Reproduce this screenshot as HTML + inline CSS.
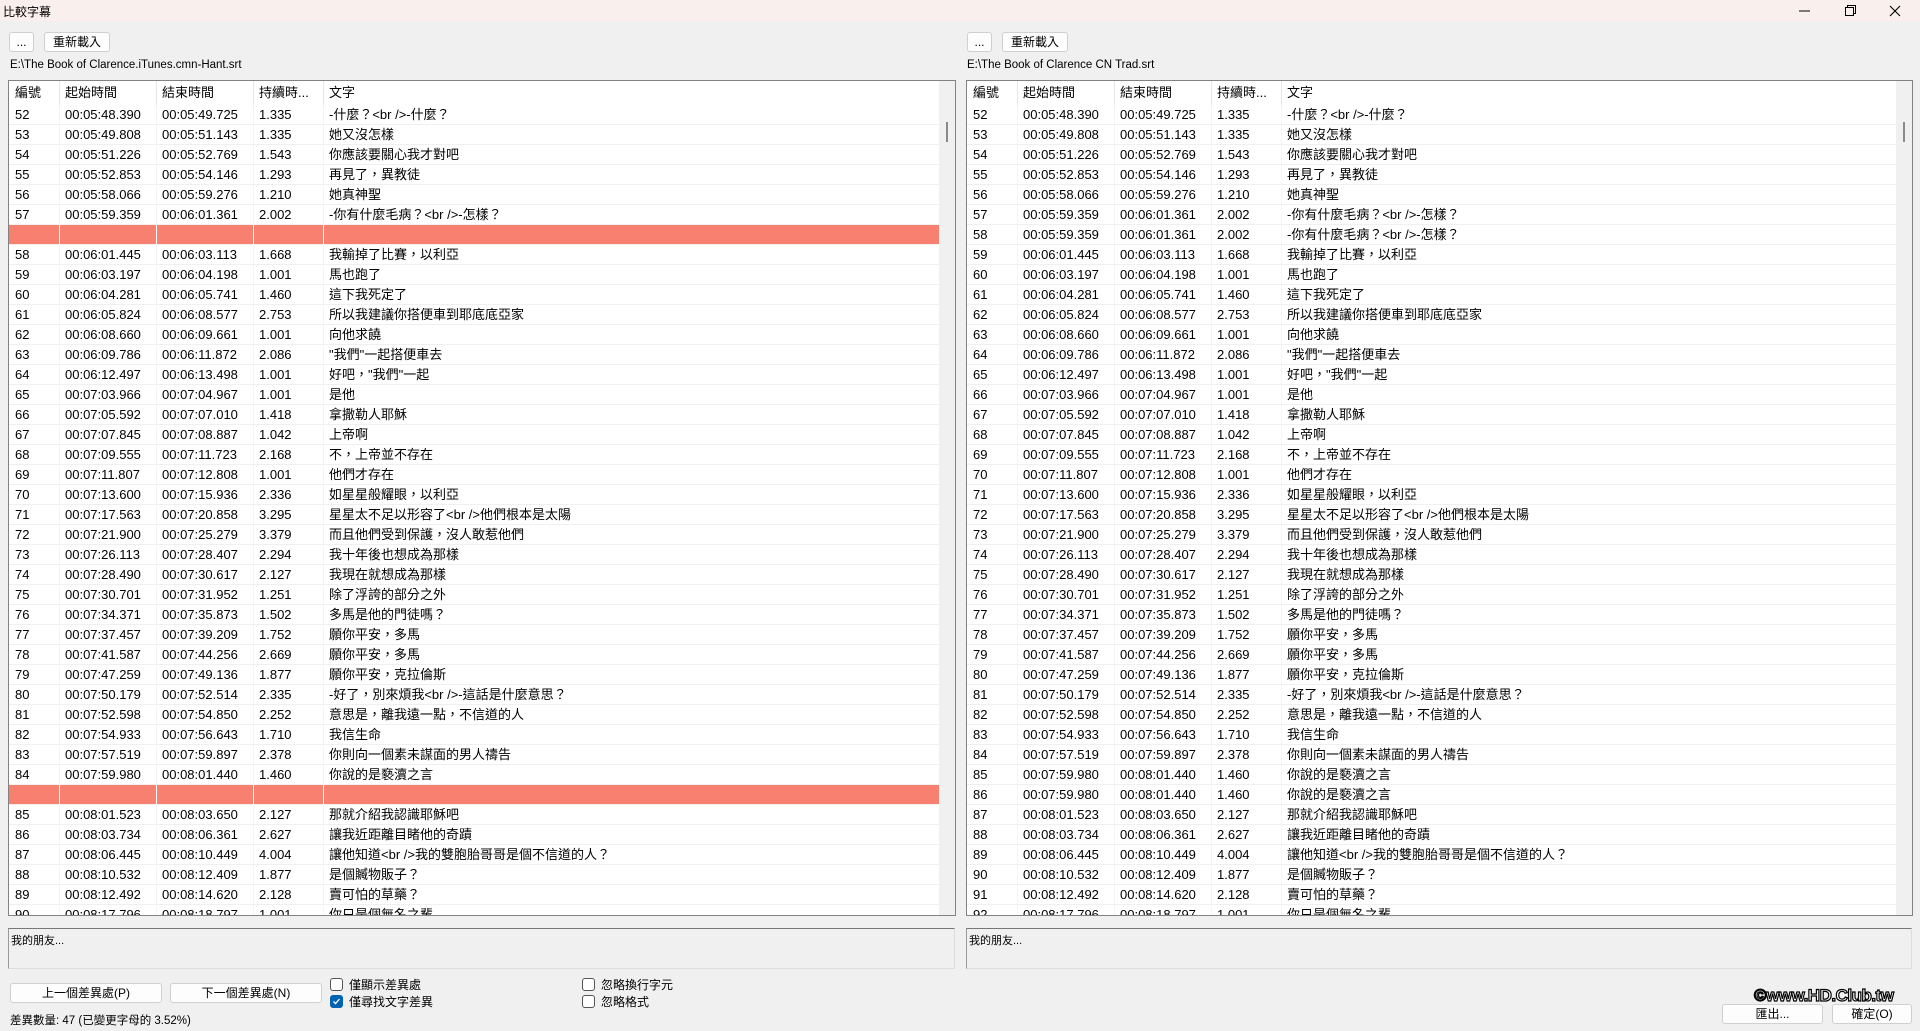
<!DOCTYPE html>
<html><head><meta charset="utf-8">
<style>
*{box-sizing:border-box;margin:0;padding:0}
body{width:1920px;height:1031px;background:#f0f0f0;font-family:"Liberation Sans","Noto Sans CJK TC",sans-serif;font-size:13px;color:#000;position:relative;overflow:hidden}
.title{position:absolute;left:0;top:0;width:1920px;height:21px;background:#f9f0ee}
.title span{position:absolute;left:3px;top:3px;font-size:12px}
.btn{position:absolute;background:#fdfdfd;border:1px solid #d0d0d0;border-radius:3px;font-size:12px;text-align:center;line-height:18px}
.path{position:absolute;font-size:11.5px;top:59px}
.tbl{position:absolute;top:80px;height:836px;background:#fff;border:1px solid #828282;overflow:hidden}
.hd,.r{position:absolute;left:0;height:20px;white-space:nowrap;width:930px}
.hd{top:0;height:24px;line-height:24px}
.r{line-height:20px;border-bottom:1px solid #f0f0f0}
.hd span,.r span{display:inline-block;padding-left:5px;overflow:hidden;vertical-align:top}
.hd span{border-right:1px solid #e5e5e5;height:24px}
.r span{border-right:1px solid #f4f4f4;height:20px}
.c1{width:51px;padding-left:6px!important}.c2{width:97px}.c3{width:97px}.c4{width:70px}.c5{width:615px}
.pk{background:#f88070}
.pk span{border-right:1px solid #fff}
.r span.c5,.hd span.c5{border-right:none}
.sb{position:absolute;top:0;right:0;width:16px;height:834px;background:#f0f0f0}
.sb i{position:absolute;left:7px;top:41px;width:2px;height:20px;background:#8a8a8a}
.memo{position:absolute;top:928px;height:41px;border-top:1px solid #777;border-left:1px solid #999;border-right:1px solid #ddd;border-bottom:1px solid #ddd;font-size:11px;padding:3px 2px}
.cb{position:absolute;width:13px;height:13px;border:1px solid #555;border-radius:3px;background:#fff}
.cb.on{background:#0063b1;border-color:#0063b1}
.lb{position:absolute;font-size:12px}
.wm{position:absolute;left:1754px;top:986px;font-size:17px;font-weight:bold;color:#fff;-webkit-text-stroke:1.2px #000;letter-spacing:-0.5px}
</style></head><body>
<div class="title"><span>比較字幕</span>
<svg style="position:absolute;left:1797px;top:4px" width="120" height="14"><line x1="2" y1="7" x2="13" y2="7" stroke="#000" stroke-width="1"/><rect x="48.5" y="3.5" width="8" height="8" fill="none" stroke="#000"/><path d="M50.5 3.5V1.5H58.5V9.5H56.5" fill="none" stroke="#000"/><path d="M93 2L103 12M103 2L93 12" stroke="#000" stroke-width="1.1"/></svg>
</div>

<div class="btn" style="left:9px;top:32px;width:25px;height:20px">...</div>
<div class="btn" style="left:44px;top:32px;width:66px;height:20px">重新載入</div>
<div class="path" style="left:10px">E:\The Book of Clarence.iTunes.cmn-Hant.srt</div>
<div class="btn" style="left:967px;top:32px;width:25px;height:20px">...</div>
<div class="btn" style="left:1002px;top:32px;width:66px;height:20px">重新載入</div>
<div class="path" style="left:967px">E:\The Book of Clarence CN Trad.srt</div>

<div class="tbl" style="left:8px;width:948px">
<div class="hd"><span class="c1">編號</span><span class="c2">起始時間</span><span class="c3">結束時間</span><span class="c4">持續時...</span><span class="c5">文字</span></div>
<div class="r" style="top:24px"><span class="c1">52</span><span class="c2">00:05:48.390</span><span class="c3">00:05:49.725</span><span class="c4">1.335</span><span class="c5">-什麼？&lt;br /&gt;-什麼？</span></div>
<div class="r" style="top:44px"><span class="c1">53</span><span class="c2">00:05:49.808</span><span class="c3">00:05:51.143</span><span class="c4">1.335</span><span class="c5">她又沒怎樣</span></div>
<div class="r" style="top:64px"><span class="c1">54</span><span class="c2">00:05:51.226</span><span class="c3">00:05:52.769</span><span class="c4">1.543</span><span class="c5">你應該要關心我才對吧</span></div>
<div class="r" style="top:84px"><span class="c1">55</span><span class="c2">00:05:52.853</span><span class="c3">00:05:54.146</span><span class="c4">1.293</span><span class="c5">再見了，異教徒</span></div>
<div class="r" style="top:104px"><span class="c1">56</span><span class="c2">00:05:58.066</span><span class="c3">00:05:59.276</span><span class="c4">1.210</span><span class="c5">她真神聖</span></div>
<div class="r" style="top:124px"><span class="c1">57</span><span class="c2">00:05:59.359</span><span class="c3">00:06:01.361</span><span class="c4">2.002</span><span class="c5">-你有什麼毛病？&lt;br /&gt;-怎樣？</span></div>
<div class="r pk" style="top:144px"><span class="c1"></span><span class="c2"></span><span class="c3"></span><span class="c4"></span><span class="c5"></span></div>
<div class="r" style="top:164px"><span class="c1">58</span><span class="c2">00:06:01.445</span><span class="c3">00:06:03.113</span><span class="c4">1.668</span><span class="c5">我輸掉了比賽，以利亞</span></div>
<div class="r" style="top:184px"><span class="c1">59</span><span class="c2">00:06:03.197</span><span class="c3">00:06:04.198</span><span class="c4">1.001</span><span class="c5">馬也跑了</span></div>
<div class="r" style="top:204px"><span class="c1">60</span><span class="c2">00:06:04.281</span><span class="c3">00:06:05.741</span><span class="c4">1.460</span><span class="c5">這下我死定了</span></div>
<div class="r" style="top:224px"><span class="c1">61</span><span class="c2">00:06:05.824</span><span class="c3">00:06:08.577</span><span class="c4">2.753</span><span class="c5">所以我建議你搭便車到耶底底亞家</span></div>
<div class="r" style="top:244px"><span class="c1">62</span><span class="c2">00:06:08.660</span><span class="c3">00:06:09.661</span><span class="c4">1.001</span><span class="c5">向他求饒</span></div>
<div class="r" style="top:264px"><span class="c1">63</span><span class="c2">00:06:09.786</span><span class="c3">00:06:11.872</span><span class="c4">2.086</span><span class="c5">"我們"一起搭便車去</span></div>
<div class="r" style="top:284px"><span class="c1">64</span><span class="c2">00:06:12.497</span><span class="c3">00:06:13.498</span><span class="c4">1.001</span><span class="c5">好吧，"我們"一起</span></div>
<div class="r" style="top:304px"><span class="c1">65</span><span class="c2">00:07:03.966</span><span class="c3">00:07:04.967</span><span class="c4">1.001</span><span class="c5">是他</span></div>
<div class="r" style="top:324px"><span class="c1">66</span><span class="c2">00:07:05.592</span><span class="c3">00:07:07.010</span><span class="c4">1.418</span><span class="c5">拿撒勒人耶穌</span></div>
<div class="r" style="top:344px"><span class="c1">67</span><span class="c2">00:07:07.845</span><span class="c3">00:07:08.887</span><span class="c4">1.042</span><span class="c5">上帝啊</span></div>
<div class="r" style="top:364px"><span class="c1">68</span><span class="c2">00:07:09.555</span><span class="c3">00:07:11.723</span><span class="c4">2.168</span><span class="c5">不，上帝並不存在</span></div>
<div class="r" style="top:384px"><span class="c1">69</span><span class="c2">00:07:11.807</span><span class="c3">00:07:12.808</span><span class="c4">1.001</span><span class="c5">他們才存在</span></div>
<div class="r" style="top:404px"><span class="c1">70</span><span class="c2">00:07:13.600</span><span class="c3">00:07:15.936</span><span class="c4">2.336</span><span class="c5">如星星般耀眼，以利亞</span></div>
<div class="r" style="top:424px"><span class="c1">71</span><span class="c2">00:07:17.563</span><span class="c3">00:07:20.858</span><span class="c4">3.295</span><span class="c5">星星太不足以形容了&lt;br /&gt;他們根本是太陽</span></div>
<div class="r" style="top:444px"><span class="c1">72</span><span class="c2">00:07:21.900</span><span class="c3">00:07:25.279</span><span class="c4">3.379</span><span class="c5">而且他們受到保護，沒人敢惹他們</span></div>
<div class="r" style="top:464px"><span class="c1">73</span><span class="c2">00:07:26.113</span><span class="c3">00:07:28.407</span><span class="c4">2.294</span><span class="c5">我十年後也想成為那樣</span></div>
<div class="r" style="top:484px"><span class="c1">74</span><span class="c2">00:07:28.490</span><span class="c3">00:07:30.617</span><span class="c4">2.127</span><span class="c5">我現在就想成為那樣</span></div>
<div class="r" style="top:504px"><span class="c1">75</span><span class="c2">00:07:30.701</span><span class="c3">00:07:31.952</span><span class="c4">1.251</span><span class="c5">除了浮誇的部分之外</span></div>
<div class="r" style="top:524px"><span class="c1">76</span><span class="c2">00:07:34.371</span><span class="c3">00:07:35.873</span><span class="c4">1.502</span><span class="c5">多馬是他的門徒嗎？</span></div>
<div class="r" style="top:544px"><span class="c1">77</span><span class="c2">00:07:37.457</span><span class="c3">00:07:39.209</span><span class="c4">1.752</span><span class="c5">願你平安，多馬</span></div>
<div class="r" style="top:564px"><span class="c1">78</span><span class="c2">00:07:41.587</span><span class="c3">00:07:44.256</span><span class="c4">2.669</span><span class="c5">願你平安，多馬</span></div>
<div class="r" style="top:584px"><span class="c1">79</span><span class="c2">00:07:47.259</span><span class="c3">00:07:49.136</span><span class="c4">1.877</span><span class="c5">願你平安，克拉倫斯</span></div>
<div class="r" style="top:604px"><span class="c1">80</span><span class="c2">00:07:50.179</span><span class="c3">00:07:52.514</span><span class="c4">2.335</span><span class="c5">-好了，別來煩我&lt;br /&gt;-這話是什麼意思？</span></div>
<div class="r" style="top:624px"><span class="c1">81</span><span class="c2">00:07:52.598</span><span class="c3">00:07:54.850</span><span class="c4">2.252</span><span class="c5">意思是，離我遠一點，不信道的人</span></div>
<div class="r" style="top:644px"><span class="c1">82</span><span class="c2">00:07:54.933</span><span class="c3">00:07:56.643</span><span class="c4">1.710</span><span class="c5">我信生命</span></div>
<div class="r" style="top:664px"><span class="c1">83</span><span class="c2">00:07:57.519</span><span class="c3">00:07:59.897</span><span class="c4">2.378</span><span class="c5">你則向一個素未謀面的男人禱告</span></div>
<div class="r" style="top:684px"><span class="c1">84</span><span class="c2">00:07:59.980</span><span class="c3">00:08:01.440</span><span class="c4">1.460</span><span class="c5">你說的是褻瀆之言</span></div>
<div class="r pk" style="top:704px"><span class="c1"></span><span class="c2"></span><span class="c3"></span><span class="c4"></span><span class="c5"></span></div>
<div class="r" style="top:724px"><span class="c1">85</span><span class="c2">00:08:01.523</span><span class="c3">00:08:03.650</span><span class="c4">2.127</span><span class="c5">那就介紹我認識耶穌吧</span></div>
<div class="r" style="top:744px"><span class="c1">86</span><span class="c2">00:08:03.734</span><span class="c3">00:08:06.361</span><span class="c4">2.627</span><span class="c5">讓我近距離目睹他的奇蹟</span></div>
<div class="r" style="top:764px"><span class="c1">87</span><span class="c2">00:08:06.445</span><span class="c3">00:08:10.449</span><span class="c4">4.004</span><span class="c5">讓他知道&lt;br /&gt;我的雙胞胎哥哥是個不信道的人？</span></div>
<div class="r" style="top:784px"><span class="c1">88</span><span class="c2">00:08:10.532</span><span class="c3">00:08:12.409</span><span class="c4">1.877</span><span class="c5">是個贓物販子？</span></div>
<div class="r" style="top:804px"><span class="c1">89</span><span class="c2">00:08:12.492</span><span class="c3">00:08:14.620</span><span class="c4">2.128</span><span class="c5">賣可怕的草藥？</span></div>
<div class="r" style="top:824px"><span class="c1">90</span><span class="c2">00:08:17.796</span><span class="c3">00:08:18.797</span><span class="c4">1.001</span><span class="c5">你只是個無名之輩</span></div>
<div class="sb"><i></i></div>
</div>

<div class="tbl" style="left:966px;width:947px">
<div class="hd"><span class="c1">編號</span><span class="c2">起始時間</span><span class="c3">結束時間</span><span class="c4">持續時...</span><span class="c5">文字</span></div>
<div class="r" style="top:24px"><span class="c1">52</span><span class="c2">00:05:48.390</span><span class="c3">00:05:49.725</span><span class="c4">1.335</span><span class="c5">-什麼？&lt;br /&gt;-什麼？</span></div>
<div class="r" style="top:44px"><span class="c1">53</span><span class="c2">00:05:49.808</span><span class="c3">00:05:51.143</span><span class="c4">1.335</span><span class="c5">她又沒怎樣</span></div>
<div class="r" style="top:64px"><span class="c1">54</span><span class="c2">00:05:51.226</span><span class="c3">00:05:52.769</span><span class="c4">1.543</span><span class="c5">你應該要關心我才對吧</span></div>
<div class="r" style="top:84px"><span class="c1">55</span><span class="c2">00:05:52.853</span><span class="c3">00:05:54.146</span><span class="c4">1.293</span><span class="c5">再見了，異教徒</span></div>
<div class="r" style="top:104px"><span class="c1">56</span><span class="c2">00:05:58.066</span><span class="c3">00:05:59.276</span><span class="c4">1.210</span><span class="c5">她真神聖</span></div>
<div class="r" style="top:124px"><span class="c1">57</span><span class="c2">00:05:59.359</span><span class="c3">00:06:01.361</span><span class="c4">2.002</span><span class="c5">-你有什麼毛病？&lt;br /&gt;-怎樣？</span></div>
<div class="r" style="top:144px"><span class="c1">58</span><span class="c2">00:05:59.359</span><span class="c3">00:06:01.361</span><span class="c4">2.002</span><span class="c5">-你有什麼毛病？&lt;br /&gt;-怎樣？</span></div>
<div class="r" style="top:164px"><span class="c1">59</span><span class="c2">00:06:01.445</span><span class="c3">00:06:03.113</span><span class="c4">1.668</span><span class="c5">我輸掉了比賽，以利亞</span></div>
<div class="r" style="top:184px"><span class="c1">60</span><span class="c2">00:06:03.197</span><span class="c3">00:06:04.198</span><span class="c4">1.001</span><span class="c5">馬也跑了</span></div>
<div class="r" style="top:204px"><span class="c1">61</span><span class="c2">00:06:04.281</span><span class="c3">00:06:05.741</span><span class="c4">1.460</span><span class="c5">這下我死定了</span></div>
<div class="r" style="top:224px"><span class="c1">62</span><span class="c2">00:06:05.824</span><span class="c3">00:06:08.577</span><span class="c4">2.753</span><span class="c5">所以我建議你搭便車到耶底底亞家</span></div>
<div class="r" style="top:244px"><span class="c1">63</span><span class="c2">00:06:08.660</span><span class="c3">00:06:09.661</span><span class="c4">1.001</span><span class="c5">向他求饒</span></div>
<div class="r" style="top:264px"><span class="c1">64</span><span class="c2">00:06:09.786</span><span class="c3">00:06:11.872</span><span class="c4">2.086</span><span class="c5">"我們"一起搭便車去</span></div>
<div class="r" style="top:284px"><span class="c1">65</span><span class="c2">00:06:12.497</span><span class="c3">00:06:13.498</span><span class="c4">1.001</span><span class="c5">好吧，"我們"一起</span></div>
<div class="r" style="top:304px"><span class="c1">66</span><span class="c2">00:07:03.966</span><span class="c3">00:07:04.967</span><span class="c4">1.001</span><span class="c5">是他</span></div>
<div class="r" style="top:324px"><span class="c1">67</span><span class="c2">00:07:05.592</span><span class="c3">00:07:07.010</span><span class="c4">1.418</span><span class="c5">拿撒勒人耶穌</span></div>
<div class="r" style="top:344px"><span class="c1">68</span><span class="c2">00:07:07.845</span><span class="c3">00:07:08.887</span><span class="c4">1.042</span><span class="c5">上帝啊</span></div>
<div class="r" style="top:364px"><span class="c1">69</span><span class="c2">00:07:09.555</span><span class="c3">00:07:11.723</span><span class="c4">2.168</span><span class="c5">不，上帝並不存在</span></div>
<div class="r" style="top:384px"><span class="c1">70</span><span class="c2">00:07:11.807</span><span class="c3">00:07:12.808</span><span class="c4">1.001</span><span class="c5">他們才存在</span></div>
<div class="r" style="top:404px"><span class="c1">71</span><span class="c2">00:07:13.600</span><span class="c3">00:07:15.936</span><span class="c4">2.336</span><span class="c5">如星星般耀眼，以利亞</span></div>
<div class="r" style="top:424px"><span class="c1">72</span><span class="c2">00:07:17.563</span><span class="c3">00:07:20.858</span><span class="c4">3.295</span><span class="c5">星星太不足以形容了&lt;br /&gt;他們根本是太陽</span></div>
<div class="r" style="top:444px"><span class="c1">73</span><span class="c2">00:07:21.900</span><span class="c3">00:07:25.279</span><span class="c4">3.379</span><span class="c5">而且他們受到保護，沒人敢惹他們</span></div>
<div class="r" style="top:464px"><span class="c1">74</span><span class="c2">00:07:26.113</span><span class="c3">00:07:28.407</span><span class="c4">2.294</span><span class="c5">我十年後也想成為那樣</span></div>
<div class="r" style="top:484px"><span class="c1">75</span><span class="c2">00:07:28.490</span><span class="c3">00:07:30.617</span><span class="c4">2.127</span><span class="c5">我現在就想成為那樣</span></div>
<div class="r" style="top:504px"><span class="c1">76</span><span class="c2">00:07:30.701</span><span class="c3">00:07:31.952</span><span class="c4">1.251</span><span class="c5">除了浮誇的部分之外</span></div>
<div class="r" style="top:524px"><span class="c1">77</span><span class="c2">00:07:34.371</span><span class="c3">00:07:35.873</span><span class="c4">1.502</span><span class="c5">多馬是他的門徒嗎？</span></div>
<div class="r" style="top:544px"><span class="c1">78</span><span class="c2">00:07:37.457</span><span class="c3">00:07:39.209</span><span class="c4">1.752</span><span class="c5">願你平安，多馬</span></div>
<div class="r" style="top:564px"><span class="c1">79</span><span class="c2">00:07:41.587</span><span class="c3">00:07:44.256</span><span class="c4">2.669</span><span class="c5">願你平安，多馬</span></div>
<div class="r" style="top:584px"><span class="c1">80</span><span class="c2">00:07:47.259</span><span class="c3">00:07:49.136</span><span class="c4">1.877</span><span class="c5">願你平安，克拉倫斯</span></div>
<div class="r" style="top:604px"><span class="c1">81</span><span class="c2">00:07:50.179</span><span class="c3">00:07:52.514</span><span class="c4">2.335</span><span class="c5">-好了，別來煩我&lt;br /&gt;-這話是什麼意思？</span></div>
<div class="r" style="top:624px"><span class="c1">82</span><span class="c2">00:07:52.598</span><span class="c3">00:07:54.850</span><span class="c4">2.252</span><span class="c5">意思是，離我遠一點，不信道的人</span></div>
<div class="r" style="top:644px"><span class="c1">83</span><span class="c2">00:07:54.933</span><span class="c3">00:07:56.643</span><span class="c4">1.710</span><span class="c5">我信生命</span></div>
<div class="r" style="top:664px"><span class="c1">84</span><span class="c2">00:07:57.519</span><span class="c3">00:07:59.897</span><span class="c4">2.378</span><span class="c5">你則向一個素未謀面的男人禱告</span></div>
<div class="r" style="top:684px"><span class="c1">85</span><span class="c2">00:07:59.980</span><span class="c3">00:08:01.440</span><span class="c4">1.460</span><span class="c5">你說的是褻瀆之言</span></div>
<div class="r" style="top:704px"><span class="c1">86</span><span class="c2">00:07:59.980</span><span class="c3">00:08:01.440</span><span class="c4">1.460</span><span class="c5">你說的是褻瀆之言</span></div>
<div class="r" style="top:724px"><span class="c1">87</span><span class="c2">00:08:01.523</span><span class="c3">00:08:03.650</span><span class="c4">2.127</span><span class="c5">那就介紹我認識耶穌吧</span></div>
<div class="r" style="top:744px"><span class="c1">88</span><span class="c2">00:08:03.734</span><span class="c3">00:08:06.361</span><span class="c4">2.627</span><span class="c5">讓我近距離目睹他的奇蹟</span></div>
<div class="r" style="top:764px"><span class="c1">89</span><span class="c2">00:08:06.445</span><span class="c3">00:08:10.449</span><span class="c4">4.004</span><span class="c5">讓他知道&lt;br /&gt;我的雙胞胎哥哥是個不信道的人？</span></div>
<div class="r" style="top:784px"><span class="c1">90</span><span class="c2">00:08:10.532</span><span class="c3">00:08:12.409</span><span class="c4">1.877</span><span class="c5">是個贓物販子？</span></div>
<div class="r" style="top:804px"><span class="c1">91</span><span class="c2">00:08:12.492</span><span class="c3">00:08:14.620</span><span class="c4">2.128</span><span class="c5">賣可怕的草藥？</span></div>
<div class="r" style="top:824px"><span class="c1">92</span><span class="c2">00:08:17.796</span><span class="c3">00:08:18.797</span><span class="c4">1.001</span><span class="c5">你只是個無名之輩</span></div>
<div class="sb"><i></i></div>
</div>

<div class="memo" style="left:8px;width:947px">我的朋友...</div>
<div class="memo" style="left:966px;width:946px">我的朋友...</div>

<div class="btn" style="left:10px;top:983px;width:152px;height:20px">上一個差異處(P)</div>
<div class="btn" style="left:170px;top:983px;width:152px;height:20px">下一個差異處(N)</div>
<div class="cb" style="left:330px;top:978px"></div><div class="lb" style="left:349px;top:976px">僅顯示差異處</div>
<div class="cb on" style="left:330px;top:995px"><svg width="11" height="11" style="position:absolute;left:0;top:0"><path d="M2.5 5.5L4.5 7.5L8.5 3" stroke="#fff" stroke-width="1.3" fill="none"/></svg></div><div class="lb" style="left:349px;top:993px">僅尋找文字差異</div>
<div class="cb" style="left:582px;top:978px"></div><div class="lb" style="left:601px;top:976px">忽略換行字元</div>
<div class="cb" style="left:582px;top:995px"></div><div class="lb" style="left:601px;top:993px">忽略格式</div>
<div class="lb" style="left:10px;top:1012px;font-size:11.5px">差異數量: 47 (已變更字母的 3.52%)</div>

<div class="wm">©www.HD.Club.tw</div>
<div class="btn" style="left:1722px;top:1004px;width:101px;height:20px">匯出...</div>
<div class="btn" style="left:1832px;top:1004px;width:80px;height:20px">確定(O)</div>
</body></html>
